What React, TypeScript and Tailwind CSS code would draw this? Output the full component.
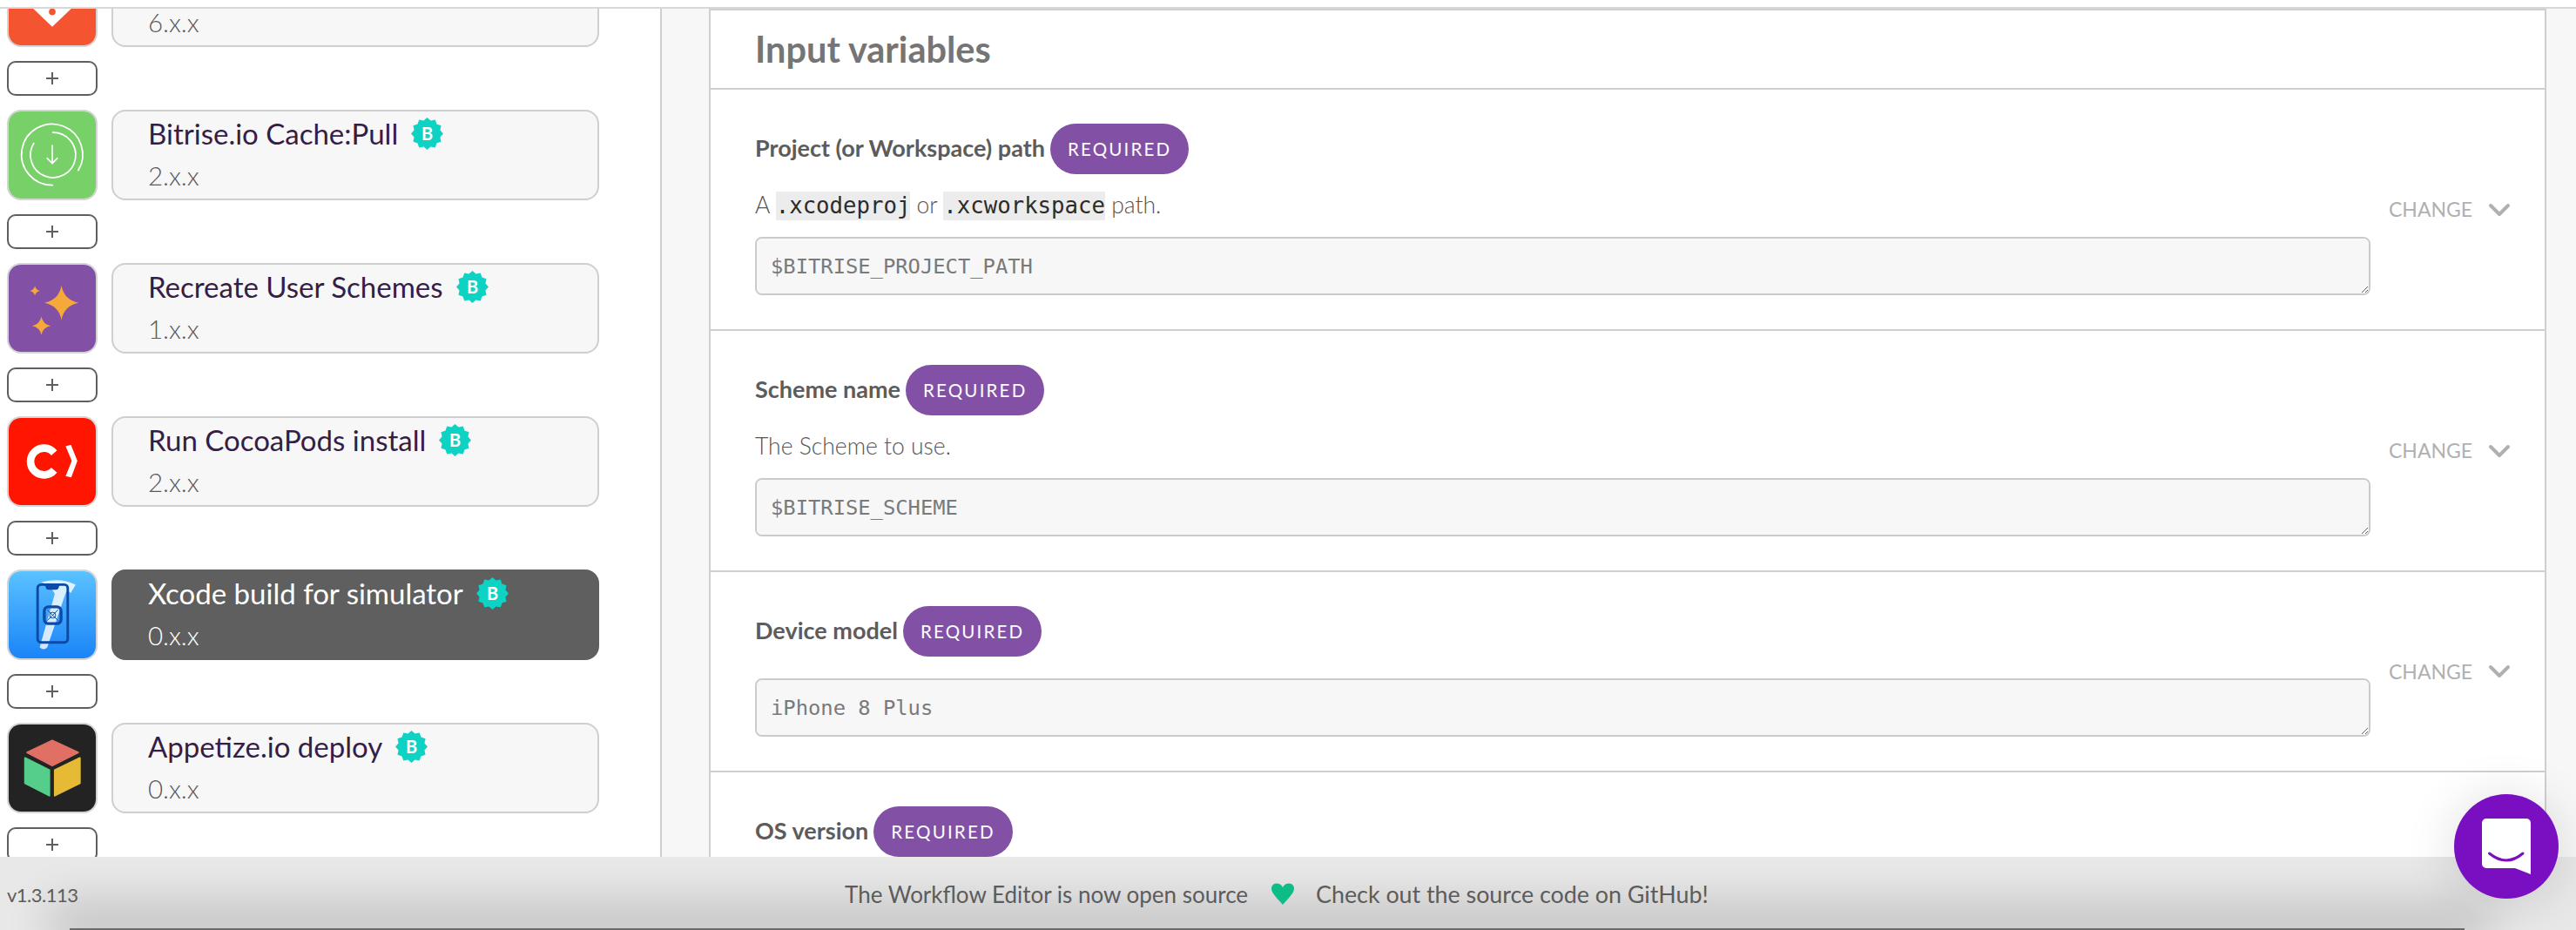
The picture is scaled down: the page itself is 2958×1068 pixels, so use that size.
import { ChevronDown } from "lucide-react";

const sans = "font-['Lato','Noto_Sans',sans-serif]";

function star(cx: number, cy: number, r: number) {
  const k = r * 0.16;
  return `M${cx} ${cy - r}Q${cx + k} ${cy - k} ${cx + r} ${cy}Q${cx + k} ${cy + k} ${cx} ${cy + r}Q${cx - k} ${cy + k} ${cx - r} ${cy}Q${cx - k} ${cy - k} ${cx} ${cy - r}Z`;
}

function burstPoints() {
  const pts: string[] = [];
  for (let i = 0; i < 24; i++) {
    const r = i % 2 === 0 ? 18.5 : 15.5;
    const a = (i * Math.PI) / 12 - Math.PI / 2;
    pts.push(`${18.5 + r * Math.cos(a)},${18.5 + r * Math.sin(a)}`);
  }
  return pts.join(" ");
}

function VerifiedBadge() {
  return (
    <svg width="37" height="37" viewBox="0 0 37 37" className="shrink-0">
      <polygon points={burstPoints()} fill="#0dd3c5" />
      <text x="18.5" y="25.5" textAnchor="middle" fontSize="20" fontWeight="700" fill="#fff" fontFamily="Lato, sans-serif">
        B
      </text>
    </svg>
  );
}

function StepIcon({ kind }: { kind: string }) {
  if (kind === "orange")
    return (
      <svg viewBox="0 0 104 104" className="w-full h-full bg-[#f55431]">
        <path d="M27 58 52 82 77 58 52 34Z" fill="#fff" />
        <circle cx="52" cy="64" r="4" fill="#f55431" />
      </svg>
    );
  if (kind === "cache")
    return (
      <svg viewBox="0 0 104 104" className="w-full h-full bg-[#77d168]" fill="none" stroke="#fff" strokeWidth="1.8">
        <path d="M53 88A36.5 36.5 0 1 1 82.7 71" />
        <path d="M30.3 37.3A27 27 0 1 0 52 25" />
        <path d="M52 40V62M45.5 55.5 52 62 58.5 55.5" />
      </svg>
    );
  if (kind === "stars")
    return (
      <svg viewBox="0 0 104 104" className="w-full h-full bg-[#8251a6]" fill="#f6a83a">
        <path d={star(63, 45.5, 20.5)} />
        <path d={star(39, 73, 11)} />
        <path d={star(31.3, 31.3, 6)} />
      </svg>
    );
  if (kind === "cocoapods")
    return (
      <svg viewBox="0 0 104 104" className="w-full h-full bg-[#ff1500]">
        <path d="M54.3 41.7A16 16 0 1 0 54.3 62.3" fill="none" stroke="#fff" strokeWidth="9" />
        <path d="M68 33.7 74.3 32 82 51.3 74.7 71 68 69.3 75.3 51.3Z" fill="#fff" />
      </svg>
    );
  if (kind === "xcode")
    return (
      <svg viewBox="0 0 104 104" className="w-full h-full">
        <defs>
          <linearGradient id="xc" x1="0" y1="0" x2="0" y2="1">
            <stop offset="0" stopColor="#5ac2ff" />
            <stop offset="1" stopColor="#1a84f8" />
          </linearGradient>
        </defs>
        <rect width="104" height="104" fill="url(#xc)" />
        <path d="M39 13Q62 7 80 16L74 26Q70 22 68 26L46 91Q42 95 37 91L55 27Q50 16 39 13Z" fill="#fff" fillOpacity="0.8" />
        <rect x="34.5" y="16" width="36" height="69" rx="4" fill="none" stroke="#0b4aa6" strokeWidth="3" />
        <path d="M43 16H61L59 21Q58 22 56 22H48Q46 22 45 21Z" fill="#0b4aa6" />
        <rect x="42.5" y="42.5" width="20" height="20" rx="5" fill="none" stroke="#0b4aa6" strokeWidth="3.5" />
        <path d="M46 46 59 59M59 46 46 59" stroke="#0b4aa6" strokeWidth="1" />
        <circle cx="52.5" cy="52.5" r="3.5" fill="none" stroke="#0b4aa6" strokeWidth="1" />
      </svg>
    );
  return (
    <svg viewBox="0 0 104 104" className="w-full h-full bg-[#232323]" strokeWidth="2" strokeLinejoin="round">
      <polygon points="52,19 83,33.5 52,49 22,33.5" fill="#e07063" stroke="#e07063" />
      <polygon points="19.5,40 48.5,54.5 48.5,85 19.5,70" fill="#55cd8b" stroke="#55cd8b" />
      <polygon points="55,54.5 85,40 85,70 55,85" fill="#e6ba35" stroke="#e6ba35" />
    </svg>
  );
}

// first step is scrolled under the top edge, only its version shows
const steps = [
  { icon: "orange", title: "", version: "6.x.x" },
  { icon: "cache", title: "Bitrise.io Cache:Pull", version: "2.x.x" },
  { icon: "stars", title: "Recreate User Schemes", version: "1.x.x" },
  { icon: "cocoapods", title: "Run CocoaPods install", version: "2.x.x" },
  { icon: "xcode", title: "Xcode build for simulator", version: "0.x.x", selected: true },
  { icon: "cube", title: "Appetize.io deploy", version: "0.x.x" },
];

function AddButton() {
  return (
    <button className="w-[104px] h-[40px] shrink-0 border-2 border-[#5f5f5f] rounded-[10px] bg-white text-[#5f5f5f] flex items-center justify-center">
      <svg width="16" height="16" viewBox="0 0 16 16" stroke="#5f5f5f" strokeWidth="2">
        <path d="M8 1V15M1 8H15" />
      </svg>
    </button>
  );
}

function StepRow({ step }: { step: (typeof steps)[0] }) {
  const selected = step.selected;
  return (
    <div className="flex gap-4 h-[104px] shrink-0">
      <div className="w-[104px] h-[104px] shrink-0 border-2 border-[#d4d4d4] rounded-[16px] overflow-hidden">
        <StepIcon kind={step.icon} />
      </div>
      <div
        className={
          selected
            ? "w-[560px] border-2 border-[#5f5f5f] bg-[#5f5f5f] rounded-[16px] pl-[40px] pt-[7px]"
            : "w-[560px] border-2 border-[#cfcfcf] bg-[#f7f7f7] rounded-[16px] pl-[40px] pt-[7px]"
        }
      >
        <div className="flex items-center gap-[15px] h-[36px]">
          <span className={selected ? "text-[33px] leading-[36px] text-white" : "text-[33px] leading-[36px] text-[#351d48]"}>
            {step.title}
          </span>
          {step.title ? <VerifiedBadge /> : null}
        </div>
        <div className={selected ? "mt-[13px] text-[29.500px] leading-[36px] font-light text-white" : "mt-[13px] text-[29.500px] leading-[36px] font-light text-[#5a5a5a]"}>
          {step.version}
        </div>
      </div>
    </div>
  );
}

function Code({ children }: { children: string }) {
  return (
    <code className="bg-[#ececec] text-[#2b2b2b] font-['DejaVu_Sans_Mono',monospace] text-[25.7px] leading-[33px] inline-block h-[33px]">
      {children}
    </code>
  );
}

function InputRow({
  label,
  value,
  description,
}: {
  label: string;
  value?: string;
  description?: React.ReactNode;
}) {
  return (
    <div className="flex border-b-2 border-[#cfcfcf] pl-[51px] py-[39px] items-center">
      <div className="w-[1855px] shrink-0">
        <div className="flex items-center gap-[6px] h-[58px]">
          <span className="mb-[2px] text-[27px] font-bold text-[#5c5c5c]">{label}</span>
          <span className="h-[58px] rounded-full bg-[#8251a6] text-white text-[20.500px] tracking-[2.2px] px-[20px] flex items-center">
            REQUIRED
          </span>
        </div>
        {description ? (
          <p className="mt-[19px] h-[33px] text-[26.500px] leading-[33px] font-light text-[#555555]">{description}</p>
        ) : null}
        {value ? (
          <textarea
            readOnly
            defaultValue={value}
            className={
              description
                ? "block mt-[20px] w-full h-[67px] border-2 border-[#cbcbcb] rounded-[8px] bg-[#f7f7f7] px-[16px] py-[14px] font-['DejaVu_Sans_Mono',monospace] text-[23.8px] leading-[36px] text-[#7a7a7a] outline-none"
                : "block mt-[25px] w-full h-[67px] border-2 border-[#cbcbcb] rounded-[8px] bg-[#f7f7f7] px-[16px] py-[14px] font-['DejaVu_Sans_Mono',monospace] text-[23.8px] leading-[36px] text-[#7a7a7a] outline-none"
            }
          />
        ) : null}
      </div>
      {value ? (
        <div className="ml-[21px] flex items-center gap-[11px] text-[#b0b0b0] text-[23px]">
          <span>CHANGE</span>
          <ChevronDown size={40} strokeWidth={2.4} className="text-[#b0b0b0]" />
        </div>
      ) : null}
    </div>
  );
}

export default function App() {
  return (
    <div className={`relative h-screen flex flex-col overflow-hidden bg-white ${sans}`}>
      <div className="h-[10px] shrink-0 bg-white border-b-2 border-[#d8d8d8]" />

      <div className="flex-1 min-h-0 flex">
        {/* Step list */}
        <aside className="w-[760px] shrink-0 border-r-2 border-[#cfcfcf] overflow-hidden bg-white">
          <div className="-mt-[60px] pl-2 flex flex-col gap-4">
            {steps.map((step) => (
              <div key={step.icon} className="flex flex-col gap-4">
                <StepRow step={step} />
                <AddButton />
              </div>
            ))}
          </div>
        </aside>

        {/* Step config */}
        <main className="flex-1 min-w-0 bg-[#f7f7f7] pl-[54px] pr-[34px]">
          <section className="h-full bg-white border-x-2 border-t-2 border-[#cfcfcf] overflow-hidden">
            <div className="h-[91px] border-b-2 border-[#cfcfcf] pl-[51px] flex items-center">
              <h2 className="text-[41.500px] font-bold text-[#757575]">Input variables</h2>
            </div>
            <InputRow
              label="Project (or Workspace) path"
              value="$BITRISE_PROJECT_PATH"
              description={
                <>
                  A <Code>.xcodeproj</Code> or <Code>.xcworkspace</Code> path.
                </>
              }
            />
            <InputRow label="Scheme name" value="$BITRISE_SCHEME" description="The Scheme to use." />
            <InputRow label="Device model" value="iPhone 8 Plus" />
            <InputRow label="OS version" />
          </section>
        </main>
      </div>

      {/* Footer */}
      <footer className="relative h-[84px] shrink-0 overflow-hidden bg-[#e8e8e8] pt-[2px] flex items-center text-[#5c5c5c] text-[26px]">
        <div className="absolute left-[80px] right-[128px] bottom-0 h-[2px] bg-[#6b6b6b] shadow-[0_-6px_50px_24px_rgba(0,0,0,0.16)]" />
        <span className="relative ml-2 w-[962px] text-[22px] tracking-[-0.5px]">v1.3.113</span>
        <span className="relative">The Workflow Editor is now open source</span>
        <svg width="28" height="26" viewBox="0 0 28 26" className="relative ml-[26px] mr-[24px] shrink-0">
          <path d="M14 25C6 16 1 11 1 6.500C1 2.500 4 0.500 7 0.500C10 0.500 12.500 2 14 5C15.500 2 18 0.500 21 0.500C24 0.500 27 2.500 27 6.500C27 11 22 16 14 25Z" fill="#0dbd85" />
        </svg>
        <span className="relative text-[26.8px]">Check out the source code on GitHub!</span>
      </footer>

      {/* Chat launcher */}
      <button className="absolute right-[20px] bottom-[36px] w-[120px] h-[120px] rounded-full bg-[#7a0fc2] shadow-[0_4px_60px_rgba(0,0,0,0.14)]">
        <svg viewBox="0 0 120 120" className="w-full h-full">
          <path d="M37 28H83A5 5 0 0 1 88 33V92L70 85H37A5 5 0 0 1 32 80V33A5 5 0 0 1 37 28Z" fill="#fff" />
          <path d="M40.500 68Q60 84 79 68" fill="none" stroke="#7a0fc2" strokeWidth="3" strokeLinecap="round" />
        </svg>
      </button>
    </div>
  );
}
